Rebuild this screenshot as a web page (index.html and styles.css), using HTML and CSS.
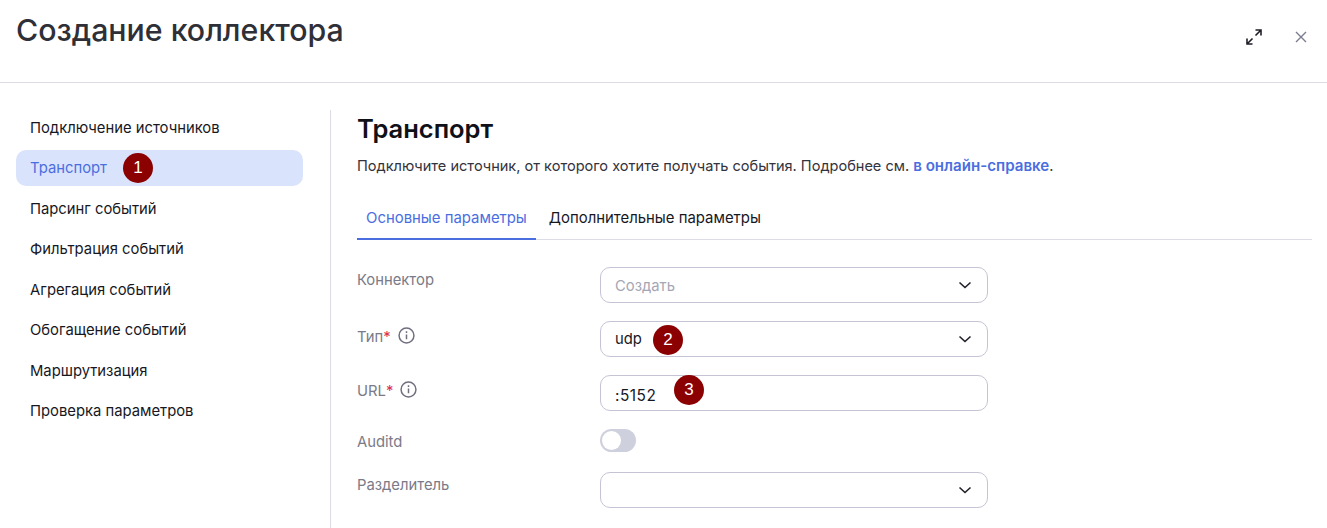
FILE: index.html
```html
<!DOCTYPE html>
<html lang="ru">

<head>
    <meta charset="UTF-8">
    <title>Создание коллектора</title>
    <link rel="stylesheet" href="styles.css">
</head>

<body>
    <header class="header">
        <h1>Создание коллектора</h1>
        <div class="header-actions">
            <svg class="icon-expand" width="16" height="16" viewBox="0 0 16 16" fill="none" stroke="#1f1f28" stroke-width="1.6">
                <path d="M9.5 1h5.5v5.5M15 1L9.5 6.5M6.5 15H1V9.5M1 15l5.5-5.5" />
            </svg>
            <svg class="icon-close" width="12" height="12" viewBox="0 0 12 12" fill="none" stroke="#7c7c90" stroke-width="1.4">
                <path d="M1 1l10 10M11 1L1 11" />
            </svg>
        </div>
    </header>

    <div class="layout">
        <nav class="sidebar">
            <div class="nav-item">Подключение источников</div>
            <div class="nav-item active">Транспорт<span class="badge badge-nav">1</span></div>
            <div class="nav-item">Парсинг событий</div>
            <div class="nav-item">Фильтрация событий</div>
            <div class="nav-item">Агрегация событий</div>
            <div class="nav-item">Обогащение событий</div>
            <div class="nav-item">Маршрутизация</div>
            <div class="nav-item">Проверка параметров</div>
        </nav>

        <main class="content">
            <h2>Транспорт</h2>
            <p class="intro">Подключите источник, от которого хотите получать события. Подробнее см. <a href="#">в онлайн-справке</a>.</p>

            <div class="tabs">
                <div class="tab active">Основные параметры</div>
                <div class="tab">Дополнительные параметры</div>
            </div>

            <div class="form">
                <div class="row">
                    <div class="label">Коннектор</div>
                    <div class="field placeholder">Создать
                        <svg class="chevron" width="14" height="8" viewBox="0 0 14 8" fill="none" stroke="#1f1f28" stroke-width="1.6">
                            <path d="M1.5 1.5L7 6.5l5.5-5" />
                        </svg>
                    </div>
                </div>
                <div class="row">
                    <div class="label label-help">Тип<span class="req">*</span>
                        <svg class="info" width="17" height="17" viewBox="0 0 16 16" fill="none" stroke="#6f6f7f" stroke-width="1.4">
                            <circle cx="8" cy="8" r="7" />
                            <path d="M8 7v4.5M8 4v1.6" />
                        </svg>
                    </div>
                    <div class="field">udp<span class="badge badge-type">2</span>
                        <svg class="chevron" width="14" height="8" viewBox="0 0 14 8" fill="none" stroke="#1f1f28" stroke-width="1.6">
                            <path d="M1.5 1.5L7 6.5l5.5-5" />
                        </svg>
                    </div>
                </div>
                <div class="row">
                    <div class="label label-help">URL<span class="req">*</span>
                        <svg class="info" width="17" height="17" viewBox="0 0 16 16" fill="none" stroke="#6f6f7f" stroke-width="1.4">
                            <circle cx="8" cy="8" r="7" />
                            <path d="M8 7v4.5M8 4v1.6" />
                        </svg>
                    </div>
                    <div class="field field-url">:5152<span class="badge badge-url">3</span></div>
                </div>
                <div class="row row-toggle">
                    <div class="label">Auditd</div>
                    <div class="toggle"><span class="knob"></span></div>
                </div>
                <div class="row">
                    <div class="label">Разделитель</div>
                    <div class="field">
                        <svg class="chevron" width="14" height="8" viewBox="0 0 14 8" fill="none" stroke="#1f1f28" stroke-width="1.6">
                            <path d="M1.5 1.5L7 6.5l5.5-5" />
                        </svg>
                    </div>
                </div>
            </div>
        </main>
    </div>
</body>

</html>
```
FILE: styles.css
```css
html,
body {
    height: 100%;
}

body {
    margin: 0;
    overflow: hidden;
    background-color: #fff;
    color: #17171f;
    font-family: Inter, "Noto Sans", sans-serif;
    font-size: 14.8px;
}

.header {
    display: flex;
    justify-content: space-between;
    height: 83px;
    padding: 0 20px 0 16px;
    box-sizing: border-box;
    border-bottom: 1px solid #dcdce6;
}

h1 {
    margin: 11px 0 0;
    font-size: 30.3px;
    line-height: 38px;
    font-weight: 500;
    color: #2f2f38;
}

.header-actions {
    display: flex;
    align-items: center;
    gap: 33px;
    height: 74px;
}

.layout {
    display: flex;
    padding-top: 27px;
}

.sidebar {
    width: 331px;
    height: 418px;
    box-sizing: border-box;
    padding: 0 27px 0 16px;
    border-right: 1px solid #dcdce6;
}

.nav-item {
    position: relative;
    display: flex;
    align-items: center;
    height: 36px;
    margin-bottom: 4.45px;
    padding-left: 14px;
    border-radius: 10px;
}

.nav-item.active {
    background-color: #dae3fc;
    color: #4a6ee0;
}

.badge {
    position: absolute;
    display: flex;
    align-items: center;
    justify-content: center;
    width: 30px;
    height: 30px;
    border-radius: 50%;
    background-color: #8b0000;
    color: #fff;
    font-family: "Liberation Sans", sans-serif;
    font-size: 17px;
    letter-spacing: 0;
}

.badge-nav {
    left: 107px;
    top: 3px;
}

.badge-type {
    left: 52px;
    top: 3px;
}

.badge-url {
    left: 73px;
    top: -1px;
}

.content {
    flex: 1;
    padding: 0 15px 0 26px;
}

h2 {
    margin: 0;
    padding-top: 1px;
    font-size: 25.5px;
    line-height: 35px;
    font-weight: 600;
    color: #101018;
}

.intro {
    margin: 10px 0 0;
    font-size: 14.55px;
    line-height: 20px;
    color: #33333d;
}

.intro a {
    color: #4a6ee0;
    font-size: 15.1px;
    font-weight: 600;
    text-decoration: none;
}

.tabs {
    display: flex;
    margin-top: 20px;
    border-bottom: 1px solid #dcdce6;
}

.tab {
    padding: 0 9px;
    height: 44px;
    font-size: 14.9px;
    line-height: 44px;
    box-sizing: border-box;
    margin-bottom: -1px;
    margin-right: 4px;
}

.tab.active {
    color: #4a6ee0;
    border-bottom: 2px solid #4a6ee0;
}

.form {
    display: flex;
    flex-direction: column;
    margin-top: 27px;
}

.row {
    display: flex;
    margin-bottom: 18px;
}

.row-toggle {
    margin-bottom: 17px;
}

.label {
    display: flex;
    width: 243px;
    height: 26px;
    line-height: 26px;
    color: #7a7a88;
}

.label-help {
    padding-top: 3px;
}

.req {
    color: #d9304f;
}

.info {
    margin: 3px 0 0 7px;
}

.field {
    position: relative;
    display: flex;
    align-items: center;
    width: 388px;
    height: 36px;
    box-sizing: border-box;
    padding-left: 14px;
    border: 1px solid #c4c4d4;
    border-radius: 10px;
}

.field.placeholder {
    color: #a6a6b4;
    padding-top: 2px;
}

.field-url {
    padding-top: 4px;
    font-size: 15.4px;
    letter-spacing: 0.5px;
}

.chevron {
    position: absolute;
    right: 15px;
    top: 13px;
}

.toggle {
    display: flex;
    align-items: center;
    width: 36px;
    height: 23px;
    box-sizing: border-box;
    padding-left: 2px;
    border-radius: 12px;
    background-color: #cfd0de;
}

.knob {
    width: 19px;
    height: 19px;
    border-radius: 50%;
    background-color: #fff;
}
```
